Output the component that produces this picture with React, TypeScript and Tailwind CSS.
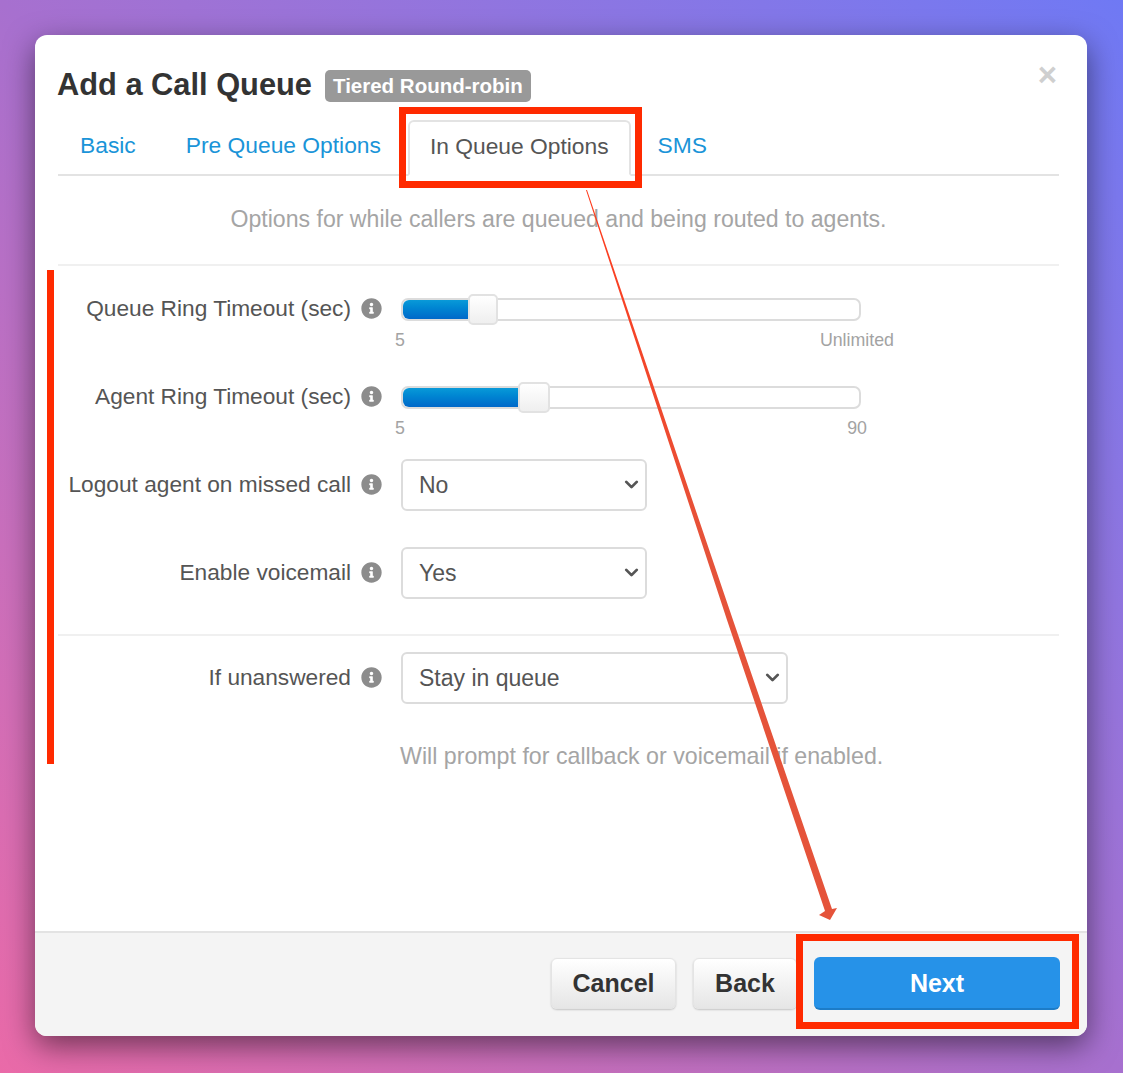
import { ChevronDown } from "lucide-react";
import { FaInfoCircle } from "react-icons/fa";

const FONT = "font-['Liberation_Sans',Arial,sans-serif]";

const Label = ({ text }: { text: string }) => (
  <div className="flex h-[30px] w-[324px] shrink-0 items-center justify-end gap-[10px] pb-[2px] text-[22.7px] text-[#555]">
    <span className="whitespace-nowrap">{text}</span>
    <FaInfoCircle className="h-[21px] w-[21px] shrink-0 text-[#8c8c8c]" />
  </div>
);

const Slider = ({
  fill,
  handle,
  max,
  maxClass,
}: {
  fill: string;
  handle: string;
  max: string;
  maxClass: string;
}) => (
  <div className="w-[460px]">
    <div className="flex h-[30px] items-center">
      <div className="relative h-[23px] w-full rounded-[7px] border-2 border-[#dcdcdc] bg-white">
        <div className={`h-full rounded-l-[6px] bg-linear-to-b from-[#0a9ad8] to-[#0068c9] ${fill}`} />
        <div
          className={`absolute top-[-6px] h-[31px] rounded-[5px] border-2 border-[#e2e2e2] bg-linear-to-b from-white to-[#efefef] ${handle}`}
        />
      </div>
    </div>
    <div className={`mt-[4px] flex justify-between text-[17.8px] leading-[24px] text-[#a3a3a3] ${maxClass}`}>
      <span className="-ml-[6px]">5</span>
      <span>{max}</span>
    </div>
  </div>
);

const Select = ({ value, width }: { value: string; width: string }) => (
  <div className={`relative h-[52px] ${width}`}>
    <select
      defaultValue={value}
      className="h-full w-full appearance-none rounded-[6px] border-2 border-[#dcdcdc] bg-white pl-[16px] text-[23px] text-[#555] outline-none"
    >
      <option>{value}</option>
    </select>
    <ChevronDown
      strokeWidth={3.2}
      className="pointer-events-none absolute right-[5px] top-[15px] h-[21px] w-[21px] text-[#555]"
    />
  </div>
);

const FooterButton = ({ text, width }: { text: string; width: string }) => (
  <button
    className={`h-[51px] rounded-[6px] border border-[#e4e4e4] bg-linear-to-b from-white to-[#e6e6e6] text-[25px] font-bold text-[#333] shadow-[0_1px_2px_rgba(0,0,0,0.2)] ${width}`}
  >
    {text}
  </button>
);

export default function App() {
  return (
    <div
      className={`relative h-[1073px] w-[1123px] overflow-hidden bg-linear-to-tr from-[#ea6aa8] via-[#a770cf] to-[#6f79f4] pl-[35px] pt-[35px] ${FONT}`}
    >
      <div className="relative flex h-[1001px] w-[1052px] flex-col rounded-[12px] bg-white shadow-[0_10px_30px_rgba(0,0,0,0.5)]">
        <div className="flex-1 pl-[23px] pr-[28px] pt-[35px]">
          <div className="flex h-[32px] items-center gap-[13px]">
            <h1 className="-ml-[1px] -mt-[2px] text-[30.8px] font-bold text-[#333]">Add a Call Queue</h1>
            <span className="rounded-[5px] bg-[#999] px-[8px] text-[20.5px] font-bold leading-[32px] text-white">
              Tiered Round-robin
            </span>
          </div>
          <span className="absolute right-[30px] top-[20px] text-[33px] font-bold leading-[40px] text-[#cfcfcf]">
            ×
          </span>

          <div className="mt-[18px] flex h-[56px] border-b-2 border-[#e3e3e3] text-[22.8px]">
            <a className="mr-[6px] flex items-center px-[22px] pb-[3px] text-[#1a94d8]">Basic</a>
            <a className="mr-[5px] flex items-center px-[22px] pb-[3px] text-[#1a94d8]">Pre Queue Options</a>
            <a className="mr-[5px] -mb-[2px] flex items-center rounded-t-[6px] border-2 border-[#e3e3e3] border-b-white bg-white px-[20px] pb-[3px] text-[#555]">
              In Queue Options
            </a>
            <a className="flex items-center px-[22px] pb-[3px] text-[#1a94d8]">SMS</a>
          </div>

          <div className="flex h-[90px] items-center justify-center border-b-2 border-[#f0f0f0] pb-[2px] text-[23.1px] text-[#a5a5a5]">
            Options for while callers are queued and being routed to agents.
          </div>

          <div className="mt-[28px] flex h-[88px] gap-[19px]">
            <Label text="Queue Ring Timeout (sec)" />
            <Slider fill="w-[66px]" handle="left-[65px] w-[30px]" max="Unlimited" maxClass="-mr-[33px]" />
          </div>
          <div className="flex h-[77px] gap-[19px]">
            <Label text="Agent Ring Timeout (sec)" />
            <Slider fill="w-[116px]" handle="left-[115px] w-[32px]" max="90" maxClass="-mr-[6px]" />
          </div>
          <div className="mb-[36px] flex items-center gap-[19px]">
            <Label text="Logout agent on missed call" />
            <Select value="No" width="w-[246px]" />
          </div>
          <div className="flex items-center gap-[19px]">
            <Label text="Enable voicemail" />
            <Select value="Yes" width="w-[246px]" />
          </div>
          <div className="mb-[16px] mt-[35px] border-t-2 border-[#f0f0f0]" />
          <div className="flex items-center gap-[19px]">
            <Label text="If unanswered" />
            <Select value="Stay in queue" width="w-[387px]" />
          </div>
          <p className="ml-[342px] mt-[38px] text-[23.2px] leading-[28px] text-[#a5a5a5]">
            Will prompt for callback or voicemail if enabled.
          </p>
        </div>

        <div className="flex h-[105px] items-center justify-end gap-[17px] rounded-b-[12px] border-t-2 border-[#e3e3e3] bg-[#f4f4f4] pb-[2px] pr-[27px]">
          <FooterButton text="Cancel" width="w-[125px]" />
          <FooterButton text="Back" width="w-[104px]" />
          <button className="h-[53px] w-[246px] rounded-[6px] border-b-2 border-[#1c7cc8] bg-[#2692e8] pt-[2px] text-[25px] font-bold text-white">
            Next
          </button>
        </div>
      </div>

      {/* annotations drawn over the screenshot */}
      <div className="absolute left-[399px] top-[107px] h-[81px] w-[243px] border-[7px] border-[#ff2a00]" />
      <div className="absolute left-[47px] top-[270px] h-[494px] w-[7px] bg-[#ff2a00]" />
      <div className="absolute left-[796px] top-[934px] h-[95px] w-[283px] border-[7px] border-[#ff2a00]" />
      <svg className="pointer-events-none absolute inset-0" width="1123" height="1073" viewBox="0 0 1123 1073">
        <defs>
          <linearGradient id="arrow" x1="0" y1="0" x2="0" y2="1">
            <stop offset="0" stopColor="#ff3a1c" />
            <stop offset="0.5" stopColor="#e5533a" />
            <stop offset="1" stopColor="#e5533a" />
          </linearGradient>
        </defs>
        <polygon
          fill="url(#arrow)"
          points="586,190 587,190 733,620 832,909 837,908 830,920 819,915 825,911 727,620"
        />
      </svg>
    </div>
  );
}
